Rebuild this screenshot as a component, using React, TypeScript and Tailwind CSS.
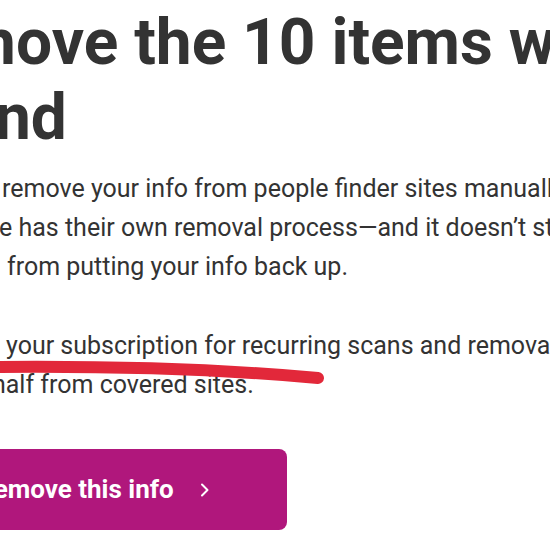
import React from 'react';

const Chevron = () => (
  <svg width="10" height="14" viewBox="0 0 10 14" fill="none" className="shrink-0">
    <path d="M2 1.5 L7.5 7 L2 12.5" stroke="white" strokeWidth="2" strokeLinecap="round" strokeLinejoin="round" />
  </svg>
);

export default function App() {
  return (
    <div className="relative w-[550px] h-[550px] overflow-hidden bg-white text-[#333333] font-['Roboto',sans-serif]">
      {/* Heading */}
      <h1 className="pt-[5px] text-[64px] leading-[75px] font-bold whitespace-nowrap">
        <span className="block ml-[-115px]">Remove the 10 items we</span>
        <span className="block ml-[-100px]">found</span>
      </h1>

      {/* Body copy */}
      <div className="mt-[14px] text-[25px] leading-[39px] whitespace-nowrap">
        <p>
          <span className="block ml-[2px]">remove your info from people finder sites manually,</span>
          <span className="block ml-[-1px]">e has their own removal process—and it doesn’t stop them</span>
          <span className="block ml-[7px]">from putting your info back up.</span>
        </p>
        <p className="mt-[40px]">
          <span className="block ml-[6px]">your subscription for recurring scans and removals on your</span>
          <span className="block ml-[-8px]">half from covered sites.</span>
        </p>
      </div>

      {/* CTA */}
      <button className="mt-[45px] ml-[-40px] h-[81px] w-[327px] flex items-center gap-[26px] pl-[17px] rounded-lg bg-[#b0177c] text-white text-[26px] font-bold">
        <span>Remove this info</span>
        <Chevron />
      </button>

      {/* Hand-drawn underline */}
      <svg className="absolute left-0 top-[355px] pointer-events-none" width="340" height="36" viewBox="0 0 340 36" fill="none">
        <path d="M-8 12 C 100 11, 220 14, 318 23" stroke="#e2283a" strokeWidth="12" strokeLinecap="round" />
      </svg>
    </div>
  );
}
